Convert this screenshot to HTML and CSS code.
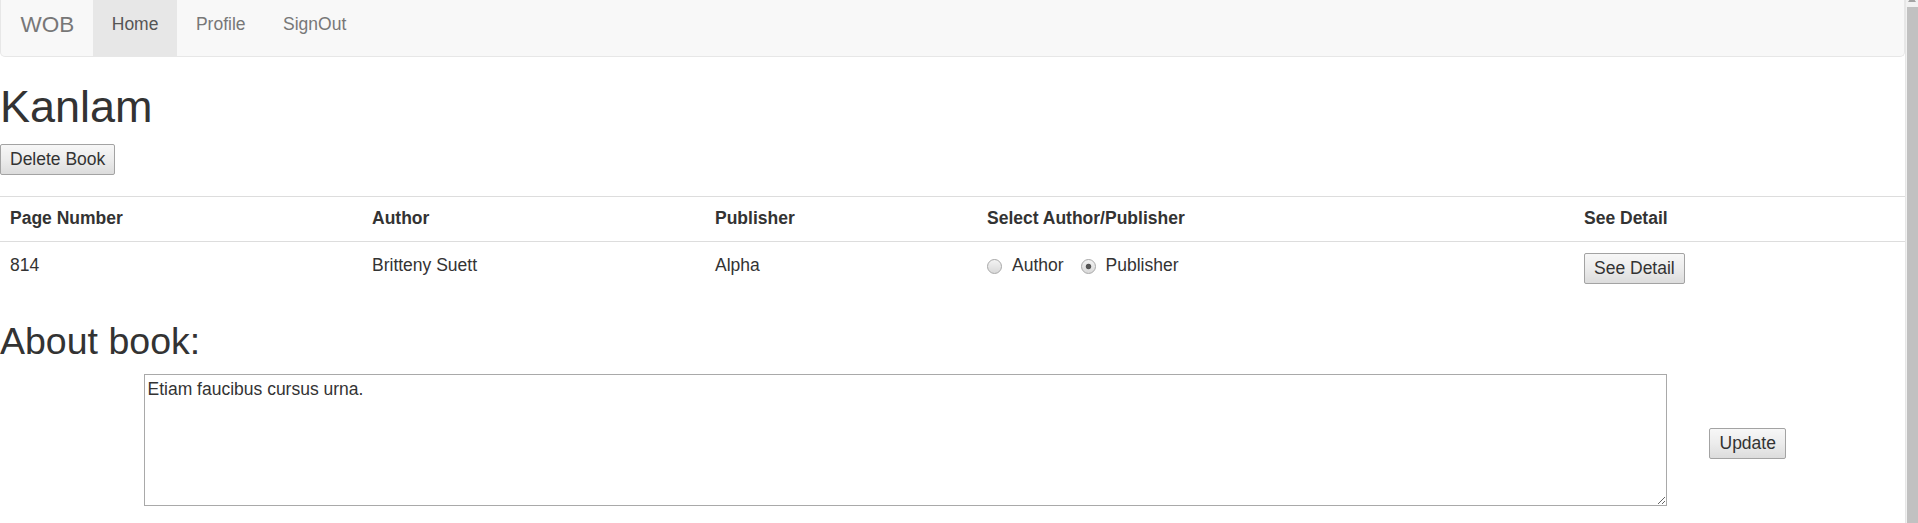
FILE: index.html
```html
<!DOCTYPE html>
<html lang="en">
<head>
<meta charset="utf-8">
<title>Kanlam</title>
<link rel="stylesheet" href="styles.css">
</head>
<body>
<div class="window">
  <div class="page">
    <nav class="navbar">
      <a class="brand" href="#">WOB</a>
      <ul class="nav">
        <li class="active"><a href="#">Home</a></li>
        <li><a href="#">Profile</a></li>
        <li><a href="#">SignOut</a></li>
      </ul>
    </nav>
    <main class="content">
      <h1 class="title">Kanlam</h1>
      <div class="actions"><button class="btn" type="button">Delete Book</button></div>
      <table class="book-table">
        <colgroup>
          <col class="c1"><col class="c2"><col class="c3"><col class="c4"><col class="c5">
        </colgroup>
        <tr>
          <th>Page Number</th>
          <th>Author</th>
          <th>Publisher</th>
          <th>Select Author/Publisher</th>
          <th>See Detail</th>
        </tr>
        <tr>
          <td>814</td>
          <td>Britteny Suett</td>
          <td>Alpha</td>
          <td>
            <div class="choice">
              <label class="opt"><input type="radio" name="sel" value="author"><span>Author</span></label>
              <label class="opt"><input type="radio" name="sel" value="publisher" checked><span>Publisher</span></label>
            </div>
          </td>
          <td><button class="btn" type="button">See Detail</button></td>
        </tr>
      </table>
      <h2 class="section-title">About book:</h2>
      <div class="about-row">
        <textarea class="about">Etiam faucibus cursus urna.</textarea>
        <button class="btn update" type="button">Update</button>
      </div>
    </main>
  </div>
  <div class="scrollbar">
    <div class="sb-arrow"></div>
    <div class="sb-thumb"></div>
  </div>
</div>
</body>
</html>
```
FILE: styles.css
```css
html, body {
  margin: 0;
  padding: 0;
  height: 100%;
  overflow: hidden;
  background: #fff;
}

body {
  font-family: "Liberation Sans", Arial, sans-serif;
  font-size: 17.5px;
  line-height: 25px;
  color: #333;
}

.window {
  display: flex;
  height: 523px;
  overflow: hidden;
}

.page {
  width: 1905px;
  flex: none;
}

/* navbar */
.navbar {
  display: flex;
  height: 56px;
  background: #f8f8f8;
  border: 1px solid #e7e7e7;
  border-top: none;
  border-radius: 0 0 5px 5px;
}

.brand {
  display: block;
  padding: 11.5px 18.75px 0 19.5px;
  font-size: 22.5px;
  line-height: 25px;
  color: #777;
  text-decoration: none;
}

.nav {
  display: flex;
  margin: 0;
  padding: 0;
  list-style: none;
}

.nav a {
  display: block;
  padding: 12px 18.75px 19px;
  line-height: 25px;
  color: #777;
  text-decoration: none;
}

.nav .active a {
  background: #e7e7e7;
  color: #555;
}

/* content */
.content {
  display: block;
}

.title {
  margin: 24.5px 0 13px;
  font-size: 45px;
  line-height: 49.5px;
  font-weight: normal;
}

.actions {
  display: flex;
  margin-bottom: 20.5px;
}

.btn {
  font-family: "Liberation Sans", Arial, sans-serif;
  font-size: 17.5px;
  line-height: 25px;
  color: #333;
  padding: 2px 9px;
  margin: 0;
  border: 1px solid #a3a3a3;
  border-radius: 2px;
  background: linear-gradient(to bottom, #f7f7f7 0%, #ececec 50%, #dcdcdc 100%);
  cursor: default;
}

/* table */
.book-table {
  width: 1905px;
  table-layout: fixed;
  border-collapse: collapse;
  border-spacing: 0;
}

.c1 { width: 362px; }
.c2 { width: 343px; }
.c3 { width: 272px; }
.c4 { width: 597px; }
.c5 { width: 331px; }

.book-table th,
.book-table td {
  padding: 9.5px 10px;
  text-align: left;
  vertical-align: top;
  line-height: 25px;
  border-top: 1px solid #ddd;
}

.book-table td {
  padding-top: 11.5px;
}

.book-table th {
  font-weight: bold;
}

.choice {
  display: flex;
  align-items: center;
}

.opt {
  display: flex;
  align-items: center;
  margin-right: 17px;
}

.opt input {
  appearance: none;
  -webkit-appearance: none;
  width: 15px;
  height: 15px;
  margin: 2px 10px 0 0;
  border: 1px solid #a9a9a9;
  border-radius: 50%;
  background: linear-gradient(to bottom, #f3f3f3, #d9d9d9);
  box-sizing: border-box;
}

.opt input:checked {
  background:
    radial-gradient(circle at 50% 50%, #555 0, #555 2.3px, rgba(85,85,85,0) 3.2px),
    linear-gradient(to bottom, #f3f3f3, #d9d9d9);
}

/* about */
.section-title {
  margin: 27.5px 0 11.5px;
  font-size: 37.5px;
  line-height: 41.25px;
  font-weight: normal;
}

.about-row {
  display: flex;
  padding-left: 144px;
  gap: 42px;
}

.about {
  box-sizing: border-box;
  width: 1523px;
  height: 132px;
  margin: 0;
  padding: 2.5px;
  border: 1px solid #a9a9a9;
  font-family: "Liberation Sans", Arial, sans-serif;
  font-size: 17.5px;
  line-height: 25px;
  color: #333;
  background: #fff;
  resize: both;
}

.update {
  align-self: center;
  margin-top: 7px;
  padding: 2px 9.5px;
}

/* fake browser scrollbar */
.scrollbar {
  width: 13px;
  flex: none;
  display: flex;
  flex-direction: column;
  background: #f1f1f1;
  border-left: 1px solid #e6e6e6;
  box-sizing: border-box;
}

.sb-arrow {
  height: 7px;
  position: relative;
  overflow: hidden;
}

.sb-arrow::before {
  content: "";
  position: absolute;
  left: 2px;
  top: -4px;
  border-left: 4px solid transparent;
  border-right: 4px solid transparent;
  border-bottom: 6px solid #a3a3a3;
}

.sb-thumb {
  flex: 1;
  margin-left: 1px;
  background: #c1c1c1;
}
```
